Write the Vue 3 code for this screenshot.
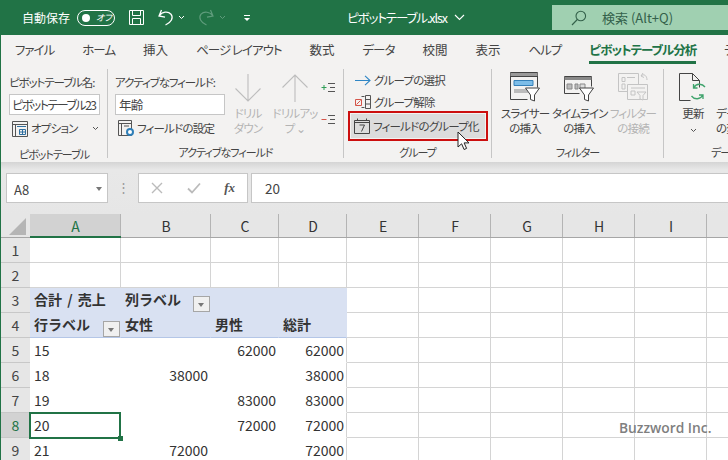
<template>
  <div class="app">
    <header class="titlebar">
      <span class="autosave">自動保存</span>
      <span class="toggle"><i class="knob"></i><em>オフ</em></span>
      <svg class="qat save" width="17" height="17" viewBox="0 0 17 17" fill="none" stroke="#fff" stroke-width="1">
        <path d="M1.5 1.5h14v14h-14z" />
        <path d="M4.5 1.5v5h8v-5M4.5 15.5v-6h8v6" />
      </svg>
      <svg class="qat undo" width="17" height="17" viewBox="0 0 17 17" fill="none" stroke="#fff" stroke-width="1.3">
        <path d="M4.5 1 2 7l6 1.2M2.3 6.8C5 2.6 11 2 14 5.200c2.700 3.600.3 8.300-5.500 10.800" />
      </svg>
      <svg class="chev c1" width="7" height="5" viewBox="0 0 7 5" fill="none" stroke="#fff"><path d="m1 1 2.500 2.500L6 1" /></svg>
      <svg class="qat redo" width="17" height="17" viewBox="0 0 17 17" fill="none" stroke="#5f9c7c" stroke-width="1.2">
        <path d="M12.500 1 15 7 9 8.200M14.700 6.800C12 2.600 6 2 3 5.200.3 8.800 2.700 13.500 8.500 16" />
      </svg>
      <svg class="chev c2" width="7" height="5" viewBox="0 0 7 5" fill="none" stroke="#5f9c7c"><path d="m1 1 2.500 2.500L6 1" /></svg>
      <svg class="more" width="8" height="8" viewBox="0 0 8 8" fill="none" stroke="#fff"><path d="M1 1.500h6" /><path d="m1 4 3 3 3-3z" fill="#fff" stroke="none" /></svg>
      <span class="filename">ピボットテーブル.xlsx</span>
      <svg class="title-chev" width="11" height="7" viewBox="0 0 11 7" fill="none" stroke="#fff" stroke-width="1.1"><path d="m1 1 4.500 4.500L10 1" /></svg>
      <div class="searchbox">
        <svg width="16" height="16" viewBox="0 0 16 16" fill="none" stroke="#33604a" stroke-width="1.1">
          <circle cx="9.800" cy="6" r="4.800" />
          <path d="M6.300 9.500 1 15" />
        </svg>
        <span>検索 (Alt+Q)</span>
      </div>
    </header>

    <div class="main">
      <nav class="tabs">
        <span
          v-for="tab in tabs"
          :key="tab"
          class="tab"
          :class="{ active: tab === activeTab, kanji: isKanji(tab) }"
        >{{ tab }}</span>
      </nav>

      <section class="ribbon">
        <div class="group g1">
          <div class="group-body col">
            <div class="rb-label">ピボットテーブル名:</div>
            <div class="rb-input name-input">ピボットテーブル23</div>
            <div class="rb-row options">
              <svg width="16" height="16" viewBox="0 0 16 16" fill="none" stroke="#555">
                <path d="M.5.5h15v15H.5zM.5 3.500h15M3.500 3.500v12" />
                <path d="M5 5.500h9M7.500 8.500h6v5h-6zM10.500 8.500v5M7.500 11h6" stroke="#2f6f9f" />
              </svg>
              <span>オプション</span>
              <svg class="small-chev" width="7" height="5" viewBox="0 0 7 5" fill="none" stroke="#555"><path d="m1 1 2.500 2.500L6 1" /></svg>
            </div>
          </div>
          <div class="group-label">ピボットテーブル</div>
        </div>

        <div class="group g2">
          <div class="group-body row">
            <div class="col field-col">
              <div class="rb-label">アクティブなフィールド:</div>
              <div class="rb-input field-input">年齢</div>
              <div class="rb-row settings">
                <svg width="17" height="17" viewBox="0 0 17 17" fill="none" stroke="#555">
                  <path d="M.5.5h13v15H.500zM.5 3.500h13M3.500 3.500v12M6 6h5" />
                  <circle cx="12" cy="12" r="3" fill="#fff" stroke="#2f7fb8" stroke-width="2" />
                </svg>
                <span>フィールドの設定</span>
              </div>
            </div>
            <div class="big-btn drill-down disabled">
              <div class="big-icon">
                <svg width="26" height="28" viewBox="0 0 26 28" fill="none" stroke="#bdbdbd" stroke-width="1.100"><path d="M13 0v27M.5 14.500 13 27l12.500-12.500" /></svg>
              </div>
              <div>ドリル<br />ダウン</div>
            </div>
            <div class="big-btn drill-up disabled">
              <div class="big-icon">
                <svg width="26" height="28" viewBox="0 0 26 28" fill="none" stroke="#bdbdbd" stroke-width="1.100"><path d="M13 28V1M.5 13.500 13 1l12.500 12.500" /></svg>
              </div>
              <div>ドリルアッ<br />プ ⌄</div>
            </div>
            <div class="col expand-col">
              <svg width="15" height="11" viewBox="0 0 15 11" fill="none">
                <path d="M.5 5.500h5M3 3v5" stroke="#2e9e57" />
                <path d="M7 1.500h7M9 5.500h5M7 9.500h7" stroke="#555" />
              </svg>
              <svg width="15" height="11" viewBox="0 0 15 11" fill="none">
                <path d="M.5 5.500h5" stroke="#d5554a" />
                <path d="M7 1.500h7M9 5.500h5M7 9.500h7" stroke="#555" />
              </svg>
            </div>
          </div>
          <div class="group-label">アクティブなフィールド</div>
        </div>

        <div class="group g3">
          <div class="group-body col">
            <div class="rb-row grp-select">
              <svg width="16" height="11" viewBox="0 0 16 11" fill="none" stroke="#2f86c5" stroke-width="1.100"><path d="M0 5.500h15M10 .8l5 4.700-5 4.700" /></svg>
              <span>グループの選択</span>
            </div>
            <div class="rb-row grp-clear">
              <svg width="17" height="14" viewBox="0 0 17 14" fill="none" stroke="#555">
                <path d="M.5 4.500h6v6h-6zM1.500 9.500l4-4" stroke="#d5554a" />
                <path d="M10.500.5h5v13h-5zM10.500 4.500h5M10.500 9h5M6.500 1.500h3M6.500 12.500h3" />
              </svg>
              <span>グループ解除</span>
            </div>
            <div class="grp-field">
              <div class="grp-field-inner">
                <svg width="16" height="16" viewBox="0 0 16 16" fill="none" stroke="#444">
                  <path d="M.5 2.500h15v13H.500zM.5 4.500h15M3.500.5v2M12.500.5v2" />
                  <path d="M5.500 7h5l-3 6.500" />
                </svg>
                <span>フィールドのグループ化</span>
              </div>
            </div>
          </div>
          <div class="group-label">グループ</div>
          <svg class="cursor" width="14" height="20" viewBox="0 0 14 20">
            <path d="M1 1v15l3.600-3.200 2.500 5.700 2.500-1.100-2.500-5.500H12z" fill="#fff" stroke="#222" stroke-width="1" />
          </svg>
        </div>

        <div class="group g4">
          <div class="group-body row">
            <div class="big-btn">
              <div class="big-icon">
                <svg width="32" height="30" viewBox="0 0 32 30" fill="none" stroke="#444">
                  <path d="M1.500 27.500V.5h27v15M1.500 27.500h17M1.500 4.500h27" />
                  <path d="M1.500 1h27v3h-27z" fill="#999" stroke="none" />
                  <path d="M5 8.500h19v5H5z" fill="#7dbde8" stroke="#3580b8" />
                  <path d="M5 17h14v4H5z" fill="#bbb" stroke="none" />
                  <path d="M16.500 16h14l-5 7v6l-4-1.500V23z" fill="#fff" />
                </svg>
              </div>
              <div>スライサー<br />の挿入</div>
            </div>
            <div class="big-btn">
              <div class="big-icon">
                <svg width="32" height="26" viewBox="0 0 32 26" fill="none" stroke="#444">
                  <path d="M1.500 17.500V.5h27v10M1.500 17.500h15" />
                  <path d="M1.500 1h27v3h-27z" fill="#888" stroke="none" />
                  <path d="M4 8h5v5H4zM12 8h3v5h-3z" fill="#bbb" stroke="#888" />
                  <path d="M17 8h5v5h-5z" fill="#ddd" stroke="#888" />
                  <path d="M16.500 12h14l-5 7v6l-4-1.500V19z" fill="#fff" />
                </svg>
              </div>
              <div>タイムライン<br />の挿入</div>
            </div>
            <div class="big-btn disabled">
              <div class="big-icon">
                <svg width="32" height="30" viewBox="0 0 32 30" fill="none" stroke="#c4c4c4">
                  <path d="M1.500 1.500h20v18h-20zM5 5.500h3v4H5zM10 5.500h8M5 12h3v5H5z" />
                  <path d="M10.500 12.500h20v15h-20z" fill="#f3f2f1" />
                  <path d="M14 16h14M14 19h4v4h-4z" />
                  <path d="M20 20h9l-3 3.500V28l-3-1v-3.500z" fill="#f3f2f1" />
                  <path d="M24 4c3-3 6 0 6 4M24 4l2-3M24 4l3 1.500" />
                </svg>
              </div>
              <div>フィルター<br />の接続</div>
            </div>
          </div>
          <div class="group-label">フィルター</div>
        </div>

        <div class="group g5">
          <div class="group-body row">
            <div class="big-btn refresh">
              <div class="big-icon">
                <svg width="28" height="29" viewBox="0 0 28 29" fill="none">
                  <path d="M.5 27.500V.5h13l7 7v7M.5 27.500h11M13.500.5v7h7" stroke="#444" />
                  <path d="M26 14c-3-4-9-3.500-11 .5M14.500 11v4h4M12.500 23c3 4 9 3.500 11-.500M24 26v-4h-4" stroke="#3fa36c" stroke-width="1.300" />
                </svg>
              </div>
              <div>更新<br /><svg class="refresh-chev" width="7" height="5" viewBox="0 0 7 5" fill="none" stroke="#555"><path d="m1 1 2.500 2.500L6 1" /></svg></div>
            </div>
            <div class="clipped-btn">データ ソース<br />の変更</div>
          </div>
          <div class="group-label">データ</div>
        </div>
      </section>

      <div class="formula-area">
        <div class="name-box">
          <span>A8</span>
          <i class="name-arrow"></i>
        </div>
        <div class="dots">⋮</div>
        <div class="fx-box">
          <svg width="12" height="12" viewBox="0 0 12 12" fill="none" stroke="#bbb" stroke-width="1.400"><path d="m1 1 10 10M11 1 1 11" /></svg>
          <svg width="14" height="12" viewBox="0 0 14 12" fill="none" stroke="#bbb" stroke-width="1.800"><path d="m1 6.500 4 4L13 1.500" /></svg>
          <span class="fx">fx</span>
        </div>
        <div class="formula-input">20</div>
      </div>

      <div class="sheet">
        <div class="corner"><i></i></div>
        <div v-for="(col, i) in columns" :key="col" class="col-head" :class="{ selected: i === 0 }">{{ col }}</div>
        <template v-for="row in rows" :key="row.no">
          <div class="row-head" :class="{ selected: row.no === 8 }">{{ row.no }}</div>
          <div
            v-for="(col, i) in columns"
            :key="col"
            class="cell"
            :class="cellClass(row, i)"
          >
            <span v-if="row.cells[i]">{{ row.cells[i] }}</span>
            <i v-if="row.filter === i" class="filter-btn"></i>
            <template v-if="row.no === 8 && i === 0">
              <b class="selection"></b>
              <b class="handle"></b>
            </template>
          </div>
        </template>
      </div>
    </div>
    <div class="watermark">Buzzword Inc.</div>
  </div>
</template>

<script setup>
const activeTab = 'ピボットテーブル分析'
const tabs = ['ファイル', 'ホーム', '挿入', 'ページ レイアウト', '数式', 'データ', '校閲', '表示', 'ヘルプ', activeTab, 'デ']
const columns = ['A', 'B', 'C', 'D', 'E', 'F', 'G', 'H', 'I', 'J']

const rows = [
  { no: 1, cells: [] },
  { no: 2, cells: [] },
  { no: 3, cells: ['合計 / 売上', '列ラベル'], head: true, filter: 1 },
  { no: 4, cells: ['行ラベル', '女性', '男性', '総計'], head: true, last: true, filter: 0 },
  { no: 5, cells: ['15', '', '62000', '62000'], body: true },
  { no: 6, cells: ['18', '38000', '', '38000'], body: true },
  { no: 7, cells: ['19', '', '83000', '83000'], body: true },
  { no: 8, cells: ['20', '', '72000', '72000'], body: true },
  { no: 9, cells: ['21', '72000', '', '72000'], body: true }
]

const isKanji = (text) => /^[\u4e00-\u9fff]+$/.test(text)

const cellClass = (row, i) => {
  const inTable = i < 4
  return {
    head: row.head && inTable,
    'head-last': row.last && inTable,
    body: row.body && inTable,
    edge: i === 3,
    num: row.body && i > 0,
    current: row.no === 8 && i === 0
  }
}
</script>

<style scoped>
.app {
  position: relative;
  width: 728px;
  height: 460px;
  overflow: hidden;
  background: #fff;
  color: #444;
  font-family: "Noto Sans CJK JP", "Noto Sans", sans-serif;
  font-feature-settings: "palt";
}

.titlebar {
  display: flex;
  align-items: center;
  height: 35px;
  background: #217346;
  color: #fff;
  font-size: 12px;
}
.titlebar svg {
  flex: none;
}
.autosave {
  flex: none;
  width: 50px;
  margin-left: 22px;
  font-size: 12px;
  white-space: nowrap;
}
.toggle {
  display: flex;
  flex: none;
  align-items: center;
  box-sizing: border-box;
  width: 38px;
  height: 16px;
  margin-left: 5px;
  border: 1px solid #fff;
  border-radius: 8px;
}
.knob {
  width: 8px;
  height: 8px;
  margin-left: 4px;
  border-radius: 50%;
  background: #fff;
}
.toggle em {
  margin-left: 6px;
  font-size: 9px;
  font-style: italic;
  line-height: 1;
}
.save {
  margin-left: 13px;
}
.undo {
  margin-left: 12px;
}
.chev {
  margin-left: 4px;
}
.redo {
  margin-left: 13px;
}
.c2 {
  margin-left: 4px;
}
.more {
  margin-left: 17px;
}
.filename {
  flex: none;
  width: 105px;
  margin-left: 96px;
  font-size: 12.5px;
  letter-spacing: -1.1px;
  white-space: nowrap;
}
.title-chev {
  margin-left: 2px;
}
.searchbox {
  display: flex;
  flex: none;
  align-items: center;
  box-sizing: border-box;
  width: 178px;
  height: 25px;
  margin-left: 87px;
  padding-left: 19px;
  background: #a0d0b1;
  color: #33604a;
  font-size: 13px;
}
.searchbox span {
  margin-left: 15px;
}

.main {
  border-left: 1px solid #217346;
}

.tabs {
  display: flex;
  gap: 28px;
  box-sizing: border-box;
  height: 30px;
  padding: 4px 0 0 14px;
  overflow: hidden;
  background: #f3f2f1;
  font-size: 12.5px;
  letter-spacing: -1px;
  line-height: 22px;
  white-space: nowrap;
}
.tab {
  flex: none;
}
.tab.kanji {
  letter-spacing: 0;
}
.tab.active {
  height: 22px;
  border-bottom: 3px solid #217346;
  color: #217346;
  font-weight: 700;
}

.ribbon {
  display: flex;
  box-sizing: border-box;
  height: 97px;
  padding-top: 4px;
  overflow: hidden;
  background: #f3f2f1;
  font-size: 11.5px;
  letter-spacing: -0.8px;
  line-height: 15px;
}
.ribbon svg {
  flex: none;
}
.group {
  position: relative;
  flex: none;
  box-sizing: border-box;
  height: 89px;
  border-right: 1px solid #c6c6c6;
}
.g1 {
  width: 107px;
}
.g2 {
  width: 236px;
}
.g3 {
  width: 148px;
}
.g4 {
  width: 172px;
}
.g5 {
  width: 64px;
  border-right: 0;
}
.group-body {
  height: 75px;
}
.group-label {
  height: 14px;
  font-size: 11px;
  letter-spacing: -1px;
  line-height: 17px;
  text-align: center;
  white-space: nowrap;
}
.col {
  display: flex;
  flex-direction: column;
}
.row {
  display: flex;
}
.rb-label {
  height: 22px;
  letter-spacing: -1.1px;
  line-height: 22px;
  white-space: nowrap;
}
.rb-input {
  box-sizing: border-box;
  height: 21px;
  margin-top: 1px;
  padding-left: 2px;
  border: 1px solid #c6c6c6;
  background: #fff;
  font-size: 12.5px;
  line-height: 19px;
  white-space: nowrap;
}
.rb-row {
  display: flex;
  align-items: center;
  white-space: nowrap;
}
.g1 .group-body {
  padding: 2px 0 0 8px;
}
.name-input {
  width: 91px;
  overflow: hidden;
  font-size: 12px;
  letter-spacing: -1.5px;
}
.options {
  height: 21px;
  margin-top: 3px;
  padding-left: 3px;
}
.options span {
  margin-left: 3px;
}
.small-chev {
  margin-left: 14px;
}
.field-col {
  flex: none;
  width: 110px;
  padding: 2px 0 0 7px;
}
.field-input {
  padding-left: 3px;
}
.settings {
  height: 21px;
  margin-top: 3px;
  padding-left: 3px;
}
.settings span {
  margin-left: 2px;
}
.big-btn {
  flex: none;
  width: 54px;
  text-align: center;
  white-space: nowrap;
}
.big-icon {
  display: flex;
  align-items: flex-end;
  justify-content: center;
  height: 33px;
  margin-bottom: 4px;
}
.disabled {
  color: #b4b4b4;
}
.drill-down {
  width: 40px;
  margin-left: 3px;
}
.drill-up {
  width: 50px;
  margin-left: 2px;
}
.expand-col {
  gap: 21px;
  padding: 13px 0 0 1px;
}
.g3 .group-body {
  padding: 0 0 0 4px;
}
.grp-select,
.grp-clear {
  height: 22px;
  padding-left: 7px;
}
.grp-select span {
  margin-left: 3px;
}
.grp-clear {
  margin-bottom: -2px;
}
.grp-clear span {
  margin-left: 2px;
}
.grp-field {
  box-sizing: border-box;
  width: 140px;
  height: 30px;
  padding: 1px;
  border: 2px solid #cc0f0f;
}
.grp-field-inner {
  display: flex;
  align-items: center;
  height: 24px;
  padding-left: 3px;
  background: #dcdcdc;
  white-space: nowrap;
}
.grp-field-inner span {
  margin-left: 3px;
}
.cursor {
  position: absolute;
  left: 113px;
  top: 62px;
}
.g4 .group-body {
  padding-left: 6px;
}
.g5 .group-body {
  padding-left: 9px;
}
.refresh {
  width: 40px;
}
.clipped-btn {
  flex: none;
  margin: 37px 0 0 3px;
  white-space: nowrap;
}
.g5 .group-label {
  padding-left: 47px;
  text-align: left;
}

.formula-area {
  display: flex;
  box-sizing: border-box;
  height: 52px;
  padding: 11px 0 0 5px;
  background: linear-gradient(#d4d4d4, #e8e8e8 8px, #e6e6e6);
}
.name-box,
.fx-box,
.formula-input {
  flex: none;
  box-sizing: border-box;
  height: 30px;
  border: 1px solid #c6c6c6;
  background: #fff;
}
.name-box {
  display: flex;
  align-items: center;
  justify-content: space-between;
  width: 102px;
  padding: 2px 5px 0 7px;
  font-size: 13px;
}
.name-arrow {
  width: 0;
  height: 0;
  border-top: 4px solid #777;
  border-left: 3.500px solid transparent;
  border-right: 3.500px solid transparent;
}
.dots {
  flex: none;
  width: 30px;
  color: #999;
  font-size: 13px;
  line-height: 28px;
  text-align: center;
}
.fx-box {
  display: flex;
  align-items: center;
  justify-content: space-between;
  width: 110px;
  padding: 0 12px;
}
.fx {
  color: #555;
  font-family: "Liberation Serif", serif;
  font-size: 13px;
  font-style: italic;
  font-weight: 700;
}
.formula-input {
  width: 490px;
  margin-left: 3px;
  padding-left: 13px;
  font-size: 13.500px;
  line-height: 28px;
}

.sheet {
  display: grid;
  grid-template-columns: 29px 91px 90px 68px 68px 72px 72px 72px 72px 72px 72px;
  grid-auto-rows: 25px;
  grid-template-rows: 24px;
  font-feature-settings: normal;
  color: #333;
  font-size: 14px;
}
.corner {
  box-sizing: border-box;
  background: #e6e6e6;
  border-bottom: 1px solid #a6a6a6;
}
.corner i {
  display: block;
  width: 17px;
  height: 17px;
  margin: 4px 0 0 8px;
  background: #b5b5b5;
  clip-path: polygon(100% 0, 100% 100%, 0 100%);
}
.col-head {
  position: relative;
  box-sizing: border-box;
  border-bottom: 1px solid #a6a6a6;
  background: #e6e6e6;
  font-size: 14px;
  line-height: 24px;
  text-align: center;
}
.col-head::after {
  content: "";
  position: absolute;
  right: 0;
  top: 0;
  bottom: 0;
  border-right: 1px solid #b4b4b4;
}
.col-head.selected {
  border-bottom: 2px solid #217346;
  background: #d2d2d2;
  color: #217346;
}
.row-head {
  box-sizing: border-box;
  border-bottom: 1px solid #c8c8c8;
  background: #e6e6e6;
  color: #444;
  font-size: 14px;
  line-height: 24px;
  text-align: center;
}
.row-head.selected {
  background: #d2d2d2;
  color: #217346;
}
.cell {
  position: relative;
  box-sizing: border-box;
  padding-left: 4px;
  border-right: 1px solid #d4d4d4;
  border-bottom: 1px solid #d4d4d4;
  line-height: 24px;
  white-space: nowrap;
}
.cell.current {
  z-index: 1;
}
.cell.head {
  border-color: #d9e1f2;
  background: #d9e1f2;
  font-weight: 700;
  line-height: 23px;
  word-spacing: 2px;
}
.cell.head-last {
  border-bottom-color: #b4c6e7;
}
.cell.body {
  border-bottom-color: #fff;
  border-right-color: #fff;
}
.cell.body.edge {
  border-right-color: #d4d4d4;
}
.cell.num {
  padding: 0 2px 0 0;
  text-align: right;
}
.filter-btn {
  position: absolute;
  right: 0;
  top: 8px;
  box-sizing: border-box;
  width: 17px;
  height: 16px;
  border: 1px solid #a6a6a6;
  background: #f0f0f0;
}
.filter-btn::after {
  content: "";
  position: absolute;
  left: 4px;
  top: 6px;
  border-top: 4px solid #777;
  border-left: 3.500px solid transparent;
  border-right: 3.500px solid transparent;
}
.selection {
  position: absolute;
  left: -1px;
  top: -1px;
  box-sizing: content-box;
  width: 88px;
  height: 23px;
  border: 2px solid #217346;
}
.handle {
  position: absolute;
  right: -3px;
  bottom: -4px;
  width: 5px;
  height: 5px;
  background: #217346;
}
.watermark {
  position: absolute;
  left: 619px;
  top: 417px;
  color: #7f7f7f;
  font-family: "Open Sans", "Noto Sans", sans-serif;
  font-size: 13.800px;
  font-weight: 600;
  line-height: 22px;
  font-feature-settings: normal;
}
</style>
